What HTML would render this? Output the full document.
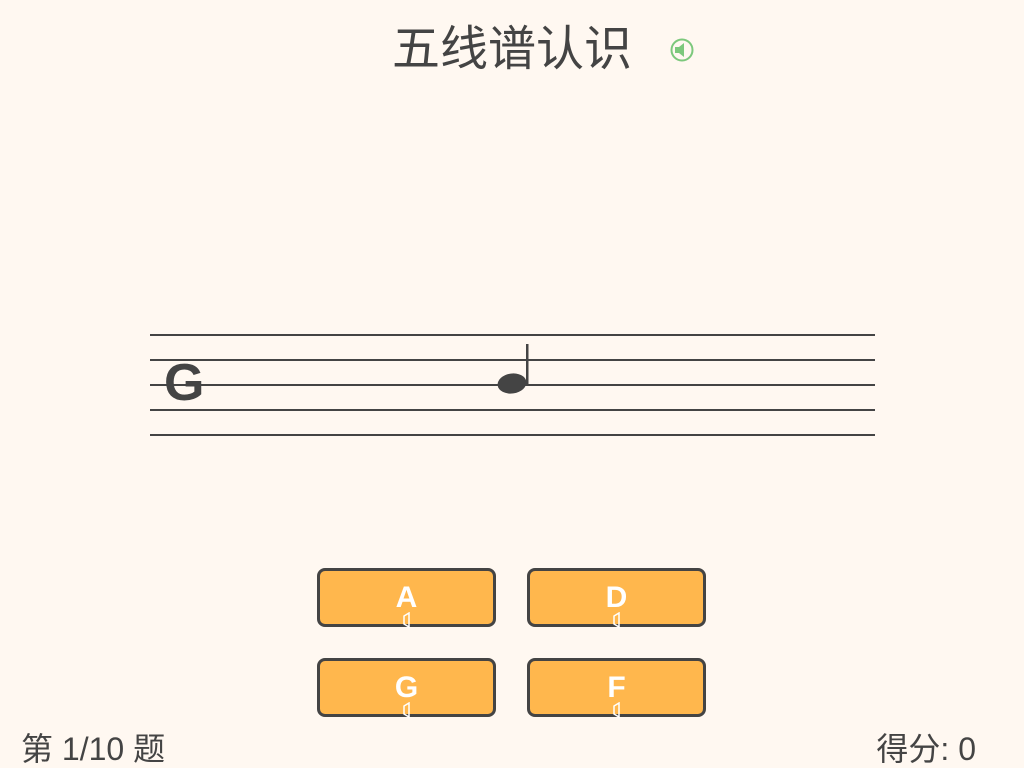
<!DOCTYPE html>
<html><head><meta charset="utf-8"><style>
body{margin:0;width:1024px;height:768px;background:#fff8f1;position:relative;overflow:hidden;font-family:"Liberation Sans","Noto Sans CJK SC",sans-serif;color:#444}
.t{position:absolute;left:0;width:1024px;top:21px;text-align:center;font-size:48px;line-height:58px}
.l{position:absolute;left:150px;width:725px;height:2px;background:#444}
.b{position:absolute;width:173px;height:53px;background:#ffb74d;border:3px solid #444;border-radius:8px;box-sizing:content-box}
.b span{position:absolute;left:0;right:0;top:10px;text-align:center;color:#fff;font-weight:bold;font-size:30px;line-height:34px}
.b svg{position:absolute;left:81px;top:41px}
.f{position:absolute;top:730px;font-size:32px;line-height:38px}
</style></head><body>
<div class="t">五线谱认识</div>
<svg style="position:absolute;left:669px;top:37px" width="26" height="26"><circle cx="13" cy="13" r="10.5" fill="none" stroke="#7cc87c" stroke-width="2"/><path d="M6 10h4l5-4v14l-5-4H6z" fill="#7cc87c"/></svg>
<div class="l" style="top:334px"></div><div class="l" style="top:359px"></div><div class="l" style="top:384px"></div><div class="l" style="top:409px"></div><div class="l" style="top:434px"></div>
<div style="position:absolute;left:164px;top:355px;font-size:52px;font-weight:bold;line-height:56px">G</div>
<svg style="position:absolute;left:490px;top:340px" width="45" height="60"><ellipse cx="22" cy="43.5" rx="14.5" ry="10" fill="#444" transform="rotate(-8 22 43.5)"/><rect x="36" y="4" width="2.5" height="40" fill="#444"/></svg>
<div class="b" style="left:317px;top:568px"><span>A</span><svg width="12" height="16"><path d="M8 1v14L3 12V4z" fill="none" stroke="#fff" stroke-width="1.5"/></svg></div>
<div class="b" style="left:527px;top:568px"><span>D</span><svg width="12" height="16"><path d="M8 1v14L3 12V4z" fill="none" stroke="#fff" stroke-width="1.5"/></svg></div>
<div class="b" style="left:317px;top:658px"><span>G</span><svg width="12" height="16"><path d="M8 1v14L3 12V4z" fill="none" stroke="#fff" stroke-width="1.5"/></svg></div>
<div class="b" style="left:527px;top:658px"><span>F</span><svg width="12" height="16"><path d="M8 1v14L3 12V4z" fill="none" stroke="#fff" stroke-width="1.5"/></svg></div>
<div class="f" style="left:21px">第 1/10 题</div>
<div class="f" style="right:48px">得分: 0</div>
</body></html>
